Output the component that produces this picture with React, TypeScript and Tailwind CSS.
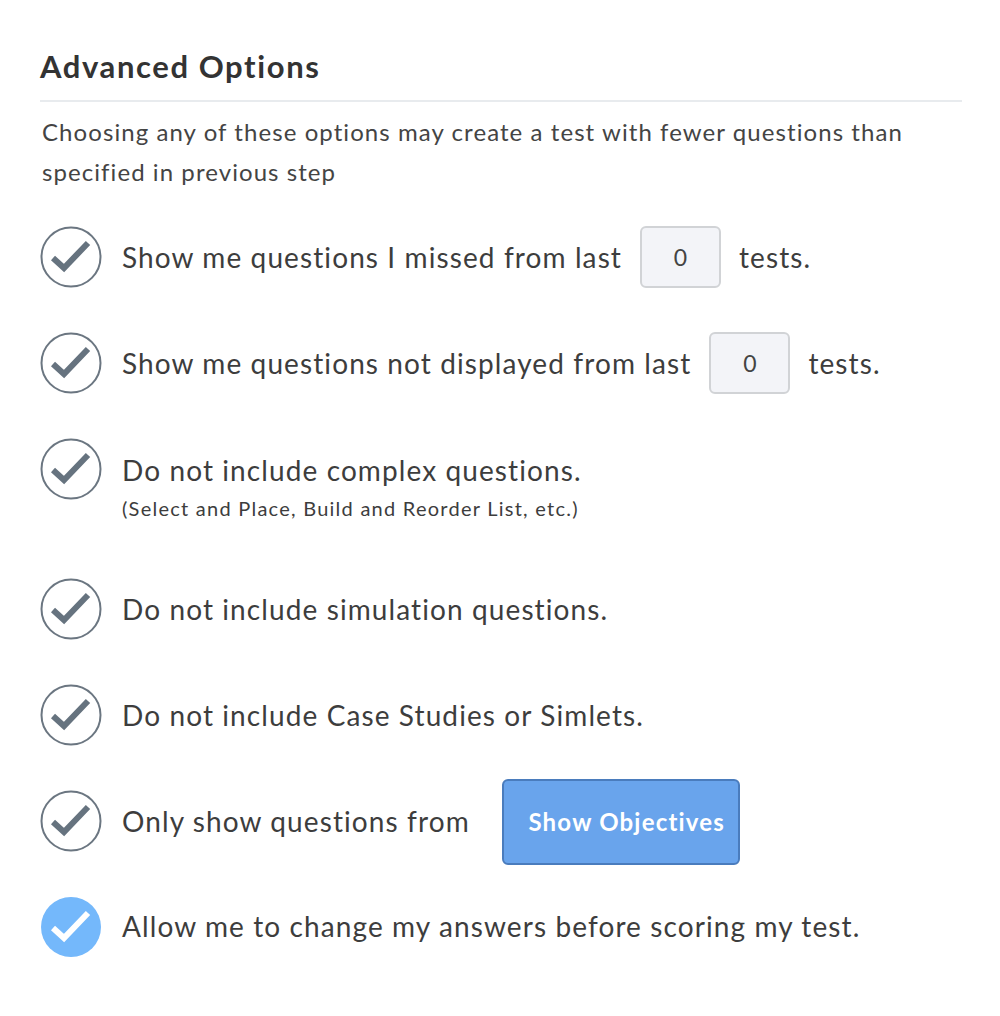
function CheckCircle({ filled }: { filled?: boolean }) {
  return (
    <svg width="62" height="62" viewBox="0 0 62 62" className="shrink-0">
      {filled ? (
        <circle cx="31" cy="31" r="30" fill="#74b8fb" />
      ) : (
        <circle cx="31" cy="31" r="29.5" fill="none" stroke="#6b7681" strokeWidth="2" />
      )}
      <polyline
        points="13,32 24,42 48,17"
        fill="none"
        stroke={filled ? '#ffffff' : '#66737f'}
        strokeWidth="6"
      />
    </svg>
  )
}

function NumBox() {
  return (
    <div className="mx-[18px] flex h-[62px] w-[81px] shrink-0 items-center justify-center rounded-md border-2 border-[#d1d3d6] bg-[#f3f4f8] text-[23px] tracking-normal text-[#444]">
      0
    </div>
  )
}

function Option({ filled, children }: { filled?: boolean; children: React.ReactNode }) {
  return (
    <div className="flex items-start gap-[20px]">
      <CheckCircle filled={filled} />
      <div className="min-h-[62px] flex-1">{children}</div>
    </div>
  )
}

export default function App() {
  return (
    <div className="min-h-[1016px] bg-white px-[40px] pt-[44px] text-[#3d3d3d]" style={{ fontFamily: 'Lato, "Open Sans", sans-serif' }}>
      <h2 className="text-[31px] font-bold leading-[44px] tracking-[1.6px] text-[#333]">Advanced Options</h2>
      <div className="mt-[12px] h-[2px] w-[922px] bg-[#e8ebee]" />
      <p className="mt-[10px] pl-[2px] text-[24px] leading-[40px] tracking-[1.07px] text-[#444]">
        Choosing any of these options may create a test with fewer questions than
        <br />
        specified in previous step
      </p>

      <div className="mt-[34px] flex flex-col gap-[44px] text-[28px] tracking-[1.1px]">
        <Option>
          <div className="flex h-[62px] items-center">
            <span>Show me questions I missed from last</span>
            <NumBox />
            <span>tests.</span>
          </div>
        </Option>
        <Option>
          <div className="flex h-[62px] items-center">
            <span>Show me questions not displayed from last</span>
            <NumBox />
            <span>tests.</span>
          </div>
        </Option>
        <Option>
          <div className="h-[96px]">
            <div className="pt-[12px] leading-[40px]">Do not include complex questions.</div>
            <div className="mt-[4px] text-[20px] leading-[28px] tracking-[1.25px]">(Select and Place, Build and Reorder List, etc.)</div>
          </div>
        </Option>
        <Option>
          <div className="flex h-[62px] items-center">Do not include simulation questions.</div>
        </Option>
        <Option>
          <div className="flex h-[62px] items-center">Do not include Case Studies or Simlets.</div>
        </Option>
        <Option>
          <div className="flex h-[62px] items-center">
            <span>Only show questions from</span>
            <button className="ml-[32px] mt-[2px] h-[86px] w-[238px] shrink-0 rounded-md border-2 border-[#4a7cbd] bg-[#69a4ec] pl-[12px] text-[24px] font-bold tracking-[1.2px] text-white">
              Show Objectives
            </button>
          </div>
        </Option>
        <Option filled>
          <div className="-mt-[1px] flex h-[62px] items-center">Allow me to change my answers before scoring my test.</div>
        </Option>
      </div>
    </div>
  )
}
